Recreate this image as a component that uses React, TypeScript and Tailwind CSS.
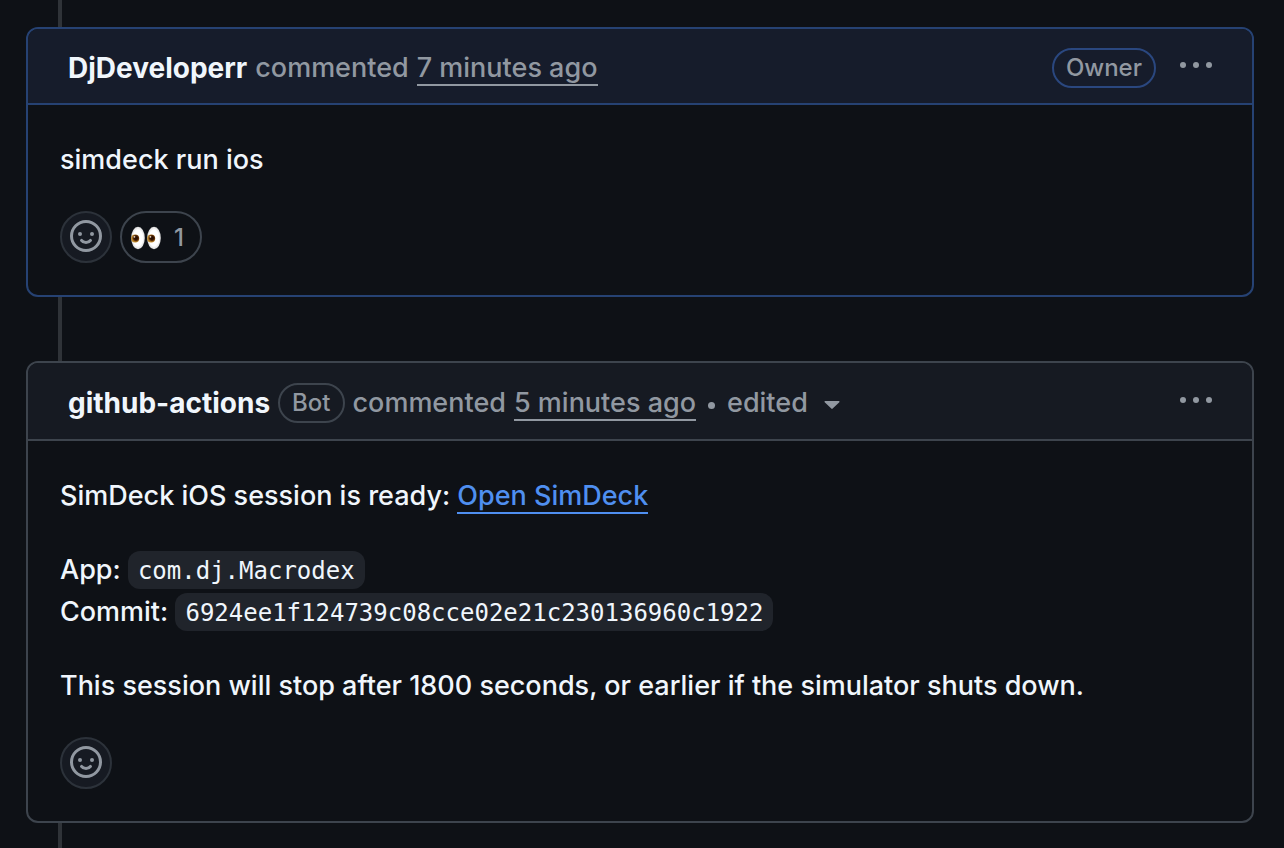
import type { ReactNode } from "react";

function SmileyIcon() {
  return (
    <svg viewBox="0 0 16 16" className="size-8 fill-current" aria-hidden="true">
      <path d="M8 0a8 8 0 1 1 0 16A8 8 0 0 1 8 0ZM1.5 8a6.5 6.5 0 1 0 13 0 6.5 6.5 0 0 0-13 0Z" />
      <path
        d="M5.75 10.2C6.2 10.85 7 11.25 8 11.25S9.8 10.85 10.25 10.2"
        fill="none"
        stroke="currentColor"
        strokeWidth="1.5"
        strokeLinecap="round"
      />
      <circle cx="5" cy="7" r="1" />
      <circle cx="11" cy="7" r="1" />
    </svg>
  );
}

function EyesIcon() {
  return (
    <svg viewBox="0 0 32 24" className="h-6 w-8" aria-hidden="true">
      <defs>
        <radialGradient id="sclera">
          <stop offset="0.7" stopColor="#ffffff" />
          <stop offset="1" stopColor="#d9d9d9" />
        </radialGradient>
        <radialGradient id="iris" cx="0.6" cy="0.45">
          <stop offset="0.35" stopColor="#2a0f02" />
          <stop offset="0.65" stopColor="#5a2c06" />
          <stop offset="1" stopColor="#c08a2c" />
        </radialGradient>
      </defs>
      <ellipse cx="8" cy="12" rx="6.8" ry="11.3" fill="url(#sclera)" />
      <ellipse cx="24" cy="12" rx="6.8" ry="11.3" fill="url(#sclera)" />
      <circle cx="5.2" cy="12.4" r="4" fill="url(#iris)" />
      <circle cx="21.2" cy="12.4" r="4" fill="url(#iris)" />
      <circle cx="4.4" cy="10.8" r="0.9" fill="#e8d9c4" />
      <circle cx="20.4" cy="10.8" r="0.9" fill="#e8d9c4" />
    </svg>
  );
}

function MenuButton() {
  return (
    <button type="button" aria-label="Show options" className="mb-1.5 text-[#9198a1]">
      <svg viewBox="0 0 32 32" className="size-8 fill-current" aria-hidden="true">
        <circle cx="3" cy="16" r="3" />
        <circle cx="16" cy="16" r="3" />
        <circle cx="29" cy="16" r="3" />
      </svg>
    </button>
  );
}

function ReactButton() {
  return (
    <button
      type="button"
      aria-label="Add reaction"
      className="flex size-13 items-center justify-center rounded-full border-2 border-[#2c323a] bg-[#161a22] pb-0.5 text-[#9198a1]"
    >
      <SmileyIcon />
    </button>
  );
}

function Label({ owner, children }: { owner?: boolean; children: ReactNode }) {
  return (
    <span
      className={
        "flex h-10 items-center rounded-full border-2 px-3 text-2xl font-medium " +
        (owner ? "border-[#2a477f]" : "border-[#3d444d]")
      }
    >
      {children}
    </span>
  );
}

function Time({ children }: { children: ReactNode }) {
  return (
    <a href="#comment" className="-mb-0.5 border-b-2 border-current leading-8">
      {children}
    </a>
  );
}

function Rail({ size }: { size: string }) {
  return <div className={"ml-8 w-1 bg-[#2f3338] " + size} />;
}

export default function App() {
  return (
    <main className="min-h-screen bg-[#0e1116] px-[26px] font-['Inter',sans-serif] text-[27px] leading-[42px] font-[450] text-[#f0f6fc]">
      <Rail size="h-[27px]" />
      <article className="mr-1 overflow-hidden rounded-xl border-2 border-[#264273]">
        <header className="flex h-[76px] items-center border-b-2 border-[#264273] bg-[#161c2b] px-10 pt-1 text-[#9198a1]">
          <div className="flex flex-1 items-center gap-2">
            <a href="#author" className="text-[28px] font-[650] text-[#f0f6fc]">
              DjDeveloperr
            </a>
            <span>commented</span>
            <Time>7 minutes ago</Time>
          </div>
          <div className="flex items-center gap-6">
            <Label owner>Owner</Label>
            <MenuButton />
          </div>
        </header>
        <div className="flex flex-col gap-[30px] px-8 pt-[34px] pb-8">
          <p>simdeck run ios</p>
          <div className="flex gap-2">
            <ReactButton />
            <button
              type="button"
              className="flex h-13 items-center gap-3 rounded-full border-2 border-[#3d444d] pt-0.5 pr-4 pl-2 text-2xl text-[#9198a1]"
            >
              <EyesIcon />
              <span>1</span>
            </button>
          </div>
        </div>
      </article>
      <Rail size="h-16" />
      <article className="mr-1 overflow-hidden rounded-xl border-2 border-[#3d444d]">
        <header className="flex h-[78px] items-center border-b-2 border-[#3d444d] bg-[#161a22] px-10 pt-1 text-[#9198a1]">
          <div className="flex flex-1 items-center gap-2">
            <a href="#bot" className="text-[28px] font-[650] text-[#f0f6fc]">
              github-actions
            </a>
            <Label>Bot</Label>
            <span>commented</span>
            <Time>5 minutes ago</Time>
            <span className="mx-1 mt-1 size-[7px] rounded-full bg-current" />
            <button type="button" className="flex items-center gap-4">
              edited
              <svg viewBox="0 0 16 8" className="mt-1 h-2 w-4 fill-current" aria-hidden="true">
                <path d="M1.2 0h13.6c.7 0 1 .8.5 1.3L8.7 7.6a1 1 0 0 1-1.4 0L.7 1.3C.2.8.5 0 1.2 0Z" />
              </svg>
            </button>
          </div>
          <MenuButton />
        </header>
        <div className="flex flex-col gap-[30px] px-8 pt-[34px] pb-8">
          <div className="flex flex-col gap-8">
            <p>
              SimDeck iOS session is ready:{" "}
              <a href="#simdeck" className="border-b-2 border-current text-[#4f8ff0]">
                Open SimDeck
              </a>
            </p>
            <p>
              App:{" "}
              <code className="rounded-xl bg-[#20242b] px-2.5 pt-1.5 pb-1 font-['DejaVu_Sans_Mono',monospace] text-2xl leading-none">
                com.dj.Macrodex
              </code>
              <br />
              Commit:{" "}
              <code className="rounded-xl bg-[#20242b] px-2.5 pt-1.5 pb-1 font-['DejaVu_Sans_Mono',monospace] text-2xl leading-none">
                6924ee1f124739c08cce02e21c230136960c1922
              </code>
            </p>
            <p>This session will stop after 1800 seconds, or earlier if the simulator shuts down.</p>
          </div>
          <ReactButton />
        </div>
      </article>
      <Rail size="h-[25px]" />
    </main>
  );
}
